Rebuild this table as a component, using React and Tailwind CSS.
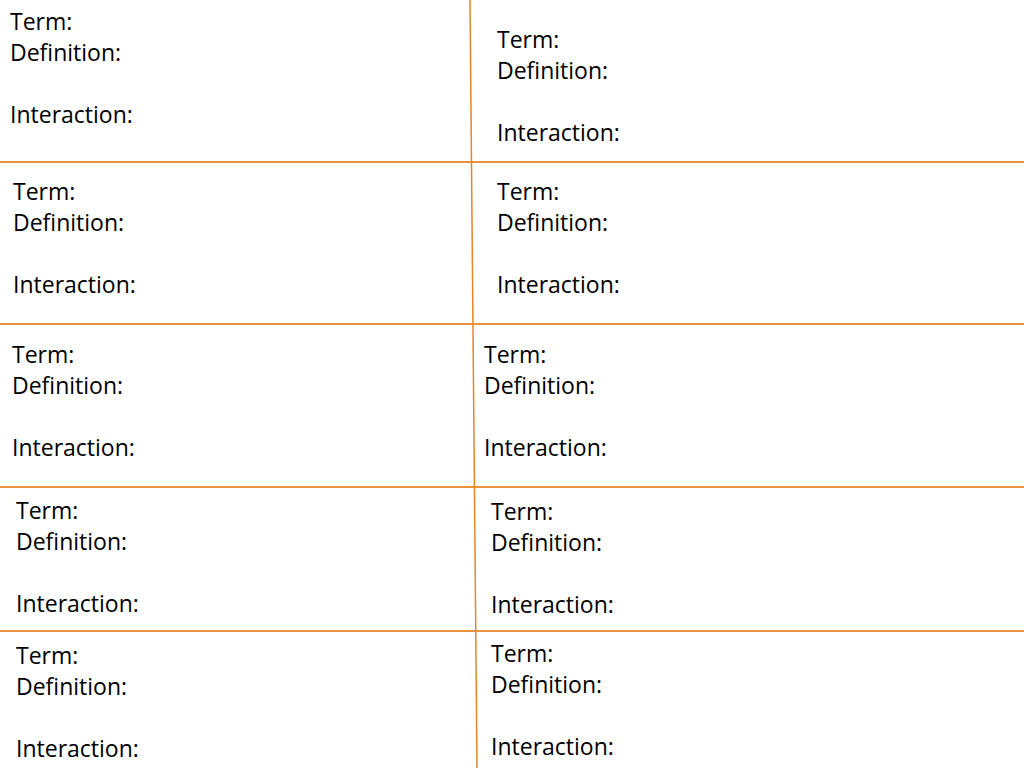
const rows = [
  { h: 'h-[163px]', l: 'pt-[6px] pl-[10px]', r: 'pt-[24px] pl-[497px]' },
  { h: 'h-[162px]', l: 'pt-[13px] pl-[13px]', r: 'pt-[13px] pl-[497px]' },
  { h: 'h-[163px]', l: 'pt-[14px] pl-[12px]', r: 'pt-[14px] pl-[484px]' },
  { h: 'h-[144px]', l: 'pt-[7px] pl-[16px]', r: 'pt-[8px] pl-[491px]' },
  { h: 'h-[136px]', l: 'pt-[8px] pl-[16px]', r: 'pt-[6px] pl-[491px]', last: true },
];

function Card({ className }) {
  return (
    <div className={`absolute top-0 left-0 text-[23px] leading-[31px] text-black ${className}`}>
      <div>Term:</div>
      <div>Definition:</div>
      <div>&nbsp;</div>
      <div>Interaction:</div>
    </div>
  );
}

export default function App() {
  return (
    <div
      className="relative w-[1024px] h-[768px] bg-white overflow-hidden flex flex-col"
      style={{ fontFamily: '"Open Sans", "Liberation Sans", sans-serif' }}
    >
      {rows.map((row, i) => (
        <div
          key={i}
          className={`relative shrink-0 ${row.h} ${row.last ? '' : 'border-b-2 border-solid border-[#e9923d]'}`}
        >
          <Card className={row.l} />
          <Card className={row.r} />
        </div>
      ))}
      <svg className="absolute inset-0 pointer-events-none" width="1024" height="768">
        <line x1="470" y1="0" x2="477" y2="768" stroke="#e4862a" strokeWidth="1.5" />
      </svg>
    </div>
  );
}
